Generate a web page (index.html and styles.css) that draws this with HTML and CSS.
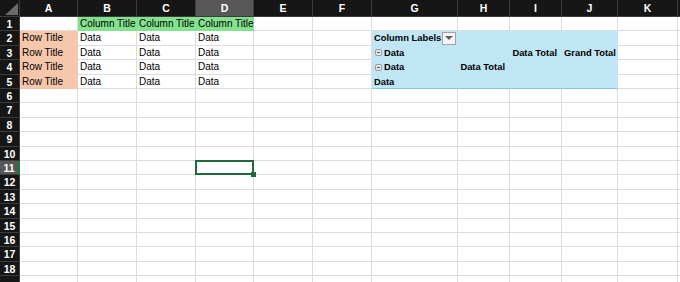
FILE: index.html
```html
<!DOCTYPE html>
<html lang="en">
<head>
    <meta charset="UTF-8">
    <title>Sheet1</title>
    <link rel="stylesheet" href="styles.css">
</head>
<body>
    <table class="sheet">
        <colgroup>
            <col class="w-hdr">
            <col class="w58"><col class="w59"><col class="w59"><col class="w58">
            <col class="w59"><col class="w59"><col class="w86"><col class="w52">
            <col class="w52"><col class="w56"><col class="w60"><col class="w64">
        </colgroup>
        <tr class="col-heads">
            <th class="corner"></th>
            <th>A</th><th>B</th><th>C</th><th class="sel">D</th><th>E</th><th>F</th>
            <th>G</th><th>H</th><th>I</th><th>J</th><th>K</th><th></th>
        </tr>
        <tr>
            <th>1</th>
            <td></td><td class="green">Column Title</td><td class="green">Column Title</td><td class="green">Column Title</td>
            <td></td><td></td><td></td><td></td><td></td><td></td><td></td><td></td>
        </tr>
        <tr>
            <th>2</th>
            <td class="orange">Row Title</td><td>Data</td><td>Data</td><td>Data</td><td></td><td></td>
            <td class="pivot b"><div class="pv-label">Column Labels <span class="dropdown"></span></div></td>
            <td class="pivot"></td><td class="pivot"></td><td class="pivot"></td><td></td><td></td>
        </tr>
        <tr>
            <th>3</th>
            <td class="orange">Row Title</td><td>Data</td><td>Data</td><td>Data</td><td></td><td></td>
            <td class="pivot b"><span class="toggle"></span>Data</td>
            <td class="pivot"></td><td class="pivot b right">Data Total</td><td class="pivot b right">Grand Total</td><td></td><td></td>
        </tr>
        <tr>
            <th>4</th>
            <td class="orange">Row Title</td><td>Data</td><td>Data</td><td>Data</td><td></td><td></td>
            <td class="pivot b"><span class="toggle"></span>Data</td>
            <td class="pivot b right">Data Total</td><td class="pivot"></td><td class="pivot"></td><td></td><td></td>
        </tr>
        <tr>
            <th>5</th>
            <td class="orange">Row Title</td><td>Data</td><td>Data</td><td>Data</td><td></td><td></td>
            <td class="pivot last b">Data</td>
            <td class="pivot last"></td><td class="pivot last"></td><td class="pivot last"></td><td></td><td></td>
        </tr>
        <tr><th>6</th><td></td><td></td><td></td><td></td><td></td><td></td><td></td><td></td><td></td><td></td><td></td><td></td></tr>
        <tr><th>7</th><td></td><td></td><td></td><td></td><td></td><td></td><td></td><td></td><td></td><td></td><td></td><td></td></tr>
        <tr><th>8</th><td></td><td></td><td></td><td></td><td></td><td></td><td></td><td></td><td></td><td></td><td></td><td></td></tr>
        <tr><th>9</th><td></td><td></td><td></td><td></td><td></td><td></td><td></td><td></td><td></td><td></td><td></td><td></td></tr>
        <tr><th>10</th><td></td><td></td><td></td><td></td><td></td><td></td><td></td><td></td><td></td><td></td><td></td><td></td></tr>
        <tr><th class="sel-row">11</th><td></td><td></td><td></td><td class="active"></td><td></td><td></td><td></td><td></td><td></td><td></td><td></td><td></td></tr>
        <tr><th>12</th><td></td><td></td><td></td><td></td><td></td><td></td><td></td><td></td><td></td><td></td><td></td><td></td></tr>
        <tr><th>13</th><td></td><td></td><td></td><td></td><td></td><td></td><td></td><td></td><td></td><td></td><td></td><td></td></tr>
        <tr><th>14</th><td></td><td></td><td></td><td></td><td></td><td></td><td></td><td></td><td></td><td></td><td></td><td></td></tr>
        <tr><th>15</th><td></td><td></td><td></td><td></td><td></td><td></td><td></td><td></td><td></td><td></td><td></td><td></td></tr>
        <tr><th>16</th><td></td><td></td><td></td><td></td><td></td><td></td><td></td><td></td><td></td><td></td><td></td><td></td></tr>
        <tr><th>17</th><td></td><td></td><td></td><td></td><td></td><td></td><td></td><td></td><td></td><td></td><td></td><td></td></tr>
        <tr><th>18</th><td></td><td></td><td></td><td></td><td></td><td></td><td></td><td></td><td></td><td></td><td></td><td></td></tr>
        <tr><th></th><td></td><td></td><td></td><td></td><td></td><td></td><td></td><td></td><td></td><td></td><td></td><td></td></tr>
    </table>
</body>
</html>
```

FILE: styles.css
```css
body {
    margin: 0;
    background: #fff;
    overflow: hidden;
    font-family: 'Liberation Sans', Arial, sans-serif;
}
.sheet {
    table-layout: fixed;
    border-collapse: separate;
    border-spacing: 0;
    width: 742px;
}
.w-hdr { width: 20px; }
.w52 { width: 52px; }
.w56 { width: 56px; }
.w58 { width: 58px; }
.w59 { width: 59px; }
.w60 { width: 60px; }
.w64 { width: 64px; }
.w86 { width: 86px; }

/* rows are 14.4px on average: 14,15,14,15,14 */
.sheet tr {
    height: 14px;
}
.sheet tr:nth-child(5n+3), .sheet tr:nth-child(5n) {
    height: 15px;
}
.sheet tr.col-heads {
    height: 17px;
}

.sheet td, .sheet th {
    box-sizing: border-box;
    padding: 0 2px;
    font-size: 10px;
    line-height: 12px;
    white-space: nowrap;
    vertical-align: middle;
    overflow: visible;
}
.sheet td {
    border-right: 1px solid #dcdcdc;
    border-bottom: 1px solid #dcdcdc;
    color: #000;
    text-align: left;
}
.sheet th {
    background: #161616;
    color: #fff;
    font-weight: bold;
    font-size: 10.5px;
    text-align: center;
    padding: 0;
    border-right: 1px solid #3c3c3c;
    border-bottom: 1px solid #3c3c3c;
}
.col-heads th.sel {
    background: #575757;
}
.sheet th.sel-row {
    background: #575757;
    border-right: 2px solid #107c41;
}
.corner {
    position: relative;
}
.corner::after {
    content: '';
    position: absolute;
    left: 5px;
    top: 3px;
    width: 13px;
    height: 12px;
    background: #6b6b6b;
    clip-path: polygon(100% 0, 100% 100%, 0 100%);
}

.green {
    background: #83e28e;
    border-right-color: #83e28e !important;
    border-bottom-color: #83e28e !important;
}
.orange {
    background: #f7c7ac;
    border-right-color: #f7c7ac !important;
    border-bottom-color: #f7c7ac !important;
}
.pivot {
    background: #c0e6f5;
    border-right-color: #c0e6f5 !important;
    border-bottom-color: #c0e6f5 !important;
}
.pivot.last {
    border-bottom-color: #7fc8e8 !important;
}
.b {
    font-weight: bold;
    font-size: 9.4px !important;
}
.right {
    text-align: right !important;
    padding-right: 4px !important;
}

.pv-label {
    display: flex;
    align-items: center;
    justify-content: space-between;
}
.dropdown {
    box-sizing: border-box;
    width: 14px;
    height: 13px;
    margin-right: -1px;
    border: 1px solid #a3a3a3;
    background: #f4f4f4;
    display: flex;
    align-items: center;
    justify-content: center;
}
.dropdown::after {
    content: '';
    border-left: 4px solid transparent;
    border-right: 4px solid transparent;
    border-top: 4px solid #5e5e5e;
}
.toggle {
    display: inline-block;
    box-sizing: border-box;
    width: 7px;
    height: 7px;
    margin: 0 2px 0 1px;
    border: 1px solid #9a9a9a;
    border-radius: 2px;
    background: #e6e6e6;
    position: relative;
    vertical-align: -0.5px;
}
.toggle::after {
    content: '';
    position: absolute;
    left: 1px;
    right: 1px;
    top: 2px;
    height: 1px;
    background: #555;
}

.active {
    position: relative;
}
.active::after {
    content: '';
    position: absolute;
    left: -1px;
    top: -1px;
    right: -1px;
    bottom: -1px;
    border: 2px solid #1d6b3c;
}
.active::before {
    content: '';
    position: absolute;
    right: -3px;
    bottom: -3px;
    width: 5px;
    height: 5px;
    background: #1d6b3c;
    z-index: 1;
}
```
